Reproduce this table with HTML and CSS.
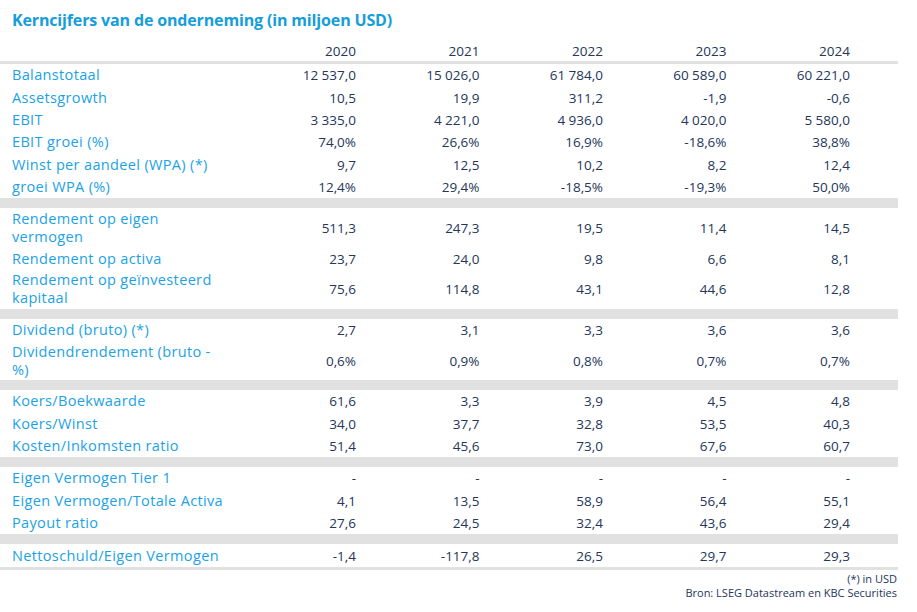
FILE: index.html
```html
<!DOCTYPE html>
<html lang="nl">
<head>
<meta charset="utf-8">
<title>Kerncijfers</title>
<link rel="stylesheet" href="styles.css">
</head>
<body>
<div class="page">
  <h1 class="title">Kerncijfers van de onderneming (in miljoen USD)</h1>
  <div class="table">
    <div class="row head"><span class="label"></span><span>2020</span><span>2021</span><span>2022</span><span>2023</span><span>2024</span></div>
    <div class="rule"></div>
    <div class="row"><span class="label">Balanstotaal</span><span>12 537,0</span><span>15 026,0</span><span>61 784,0</span><span>60 589,0</span><span>60 221,0</span></div>
    <div class="row"><span class="label">Assetsgrowth</span><span>10,5</span><span>19,9</span><span>311,2</span><span>-1,9</span><span>-0,6</span></div>
    <div class="row"><span class="label">EBIT</span><span>3 335,0</span><span>4 221,0</span><span>4 936,0</span><span>4 020,0</span><span>5 580,0</span></div>
    <div class="row"><span class="label">EBIT groei (%)</span><span>74,0%</span><span>26,6%</span><span>16,9%</span><span>-18,6%</span><span>38,8%</span></div>
    <div class="row"><span class="label">Winst per aandeel (WPA) (*)</span><span>9,7</span><span>12,5</span><span>10,2</span><span>8,2</span><span>12,4</span></div>
    <div class="row"><span class="label">groei WPA (%)</span><span>12,4%</span><span>29,4%</span><span>-18,5%</span><span>-19,3%</span><span>50,0%</span></div>
    <div class="bar"></div>
    <div class="row two"><span class="label">Rendement op eigen<br>vermogen</span><span>511,3</span><span>247,3</span><span>19,5</span><span>11,4</span><span>14,5</span></div>
    <div class="row"><span class="label">Rendement op activa</span><span>23,7</span><span>24,0</span><span>9,8</span><span>6,6</span><span>8,1</span></div>
    <div class="row two"><span class="label">Rendement op geïnvesteerd<br>kapitaal</span><span>75,6</span><span>114,8</span><span>43,1</span><span>44,6</span><span>12,8</span></div>
    <div class="bar"></div>
    <div class="row"><span class="label">Dividend (bruto) (*)</span><span>2,7</span><span>3,1</span><span>3,3</span><span>3,6</span><span>3,6</span></div>
    <div class="row two"><span class="label">Dividendrendement (bruto -<br>%)</span><span>0,6%</span><span>0,9%</span><span>0,8%</span><span>0,7%</span><span>0,7%</span></div>
    <div class="bar"></div>
    <div class="row"><span class="label">Koers/Boekwaarde</span><span>61,6</span><span>3,3</span><span>3,9</span><span>4,5</span><span>4,8</span></div>
    <div class="row"><span class="label">Koers/Winst</span><span>34,0</span><span>37,7</span><span>32,8</span><span>53,5</span><span>40,3</span></div>
    <div class="row"><span class="label">Kosten/Inkomsten ratio</span><span>51,4</span><span>45,6</span><span>73,0</span><span>67,6</span><span>60,7</span></div>
    <div class="bar"></div>
    <div class="row"><span class="label">Eigen Vermogen Tier 1</span><span>-</span><span>-</span><span>-</span><span>-</span><span>-</span></div>
    <div class="row"><span class="label">Eigen Vermogen/Totale Activa</span><span>4,1</span><span>13,5</span><span>58,9</span><span>56,4</span><span>55,1</span></div>
    <div class="row"><span class="label">Payout ratio</span><span>27,6</span><span>24,5</span><span>32,4</span><span>43,6</span><span>29,4</span></div>
    <div class="bar"></div>
    <div class="row"><span class="label">Nettoschuld/Eigen Vermogen</span><span>-1,4</span><span>-117,8</span><span>26,5</span><span>29,7</span><span>29,3</span></div>
    <div class="rule"></div>
  </div>
  <div class="foot">
    <div>(*) in USD</div>
    <div>Bron: LSEG Datastream en KBC Securities</div>
  </div>
</div>
</body>
</html>
```

FILE: styles.css
```css
html, body {
  margin: 0;
  padding: 0;
  background: #ffffff;
}

.page {
  width: 898px;
  font-family: "Open Sans", "Noto Sans", sans-serif;
  font-size: 13.5px;
  color: #24365a;
}

.title {
  margin: 0;
  padding: 8px 0 0 12px;
  height: 24px;
  line-height: 24px;
  font-size: 16px;
  letter-spacing: -0.15px;
  font-weight: 700;
  color: #159ddc;
}

.row {
  display: grid;
  grid-template-columns: 232.5px repeat(5, 123.5px) 1fr;
  align-items: center;
  line-height: 18px;
  height: 22.4px;
  box-sizing: border-box;
}

.row.two {
  height: 39px;
}

.row > span {
  text-align: right;
}

.row > .label {
  text-align: left;
  padding-left: 12px;
  font-size: 14.5px;
  letter-spacing: 0.35px;
  color: #1ba2e6;
}

.row.head {
  height: 29px;
  padding: 0 0 1px;
  align-items: end;
}

.rule {
  height: 3px;
  background: #e1e1e1;
}

.bar {
  height: 10px;
  background: #e1e1e1;
}

.foot {
  text-align: right;
  font-size: 11px;
  line-height: 14px;
  padding-top: 2px;
  padding-right: 1px;
}
```
